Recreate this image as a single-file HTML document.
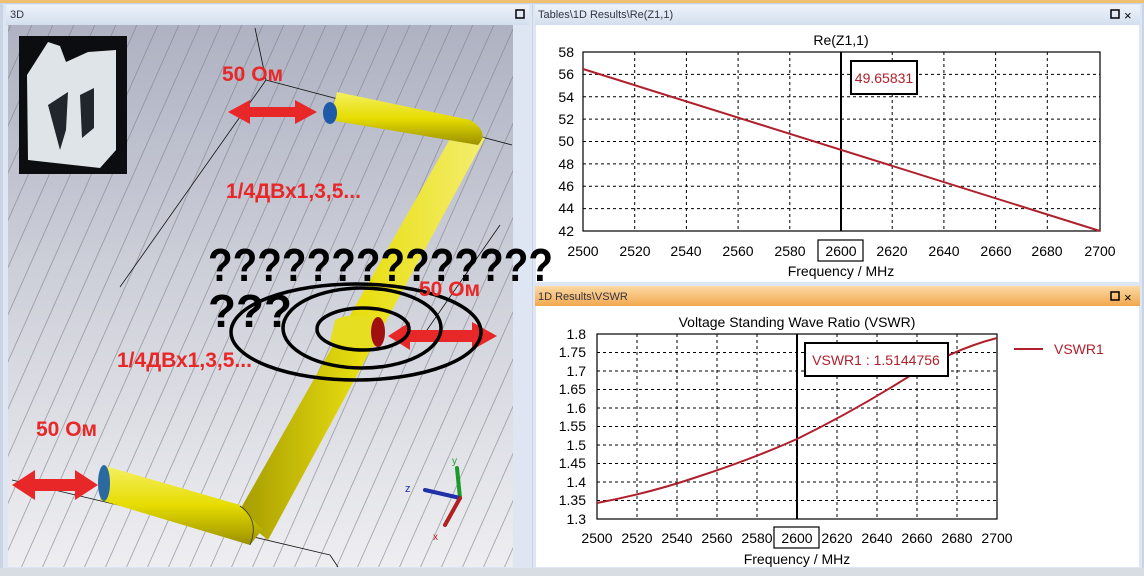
<!DOCTYPE html>
<html><head><meta charset="utf-8"><style>
html,body{margin:0;padding:0;width:1144px;height:576px;overflow:hidden;background:#c9d5e5;font-family:"Liberation Sans",sans-serif}
</style></head><body>
<svg width="1144" height="576" style="position:absolute;left:0;top:0" xmlns="http://www.w3.org/2000/svg">
<defs>
<linearGradient id="bg" x1="0" y1="0" x2="0" y2="1"><stop offset="0" stop-color="#aeb2c2"/><stop offset="0.5" stop-color="#d0d2db"/><stop offset="1" stop-color="#eeeef1"/></linearGradient>
<linearGradient id="tb" x1="0" y1="0" x2="0" y2="1"><stop offset="0" stop-color="#eef3fa"/><stop offset="1" stop-color="#d3deee"/></linearGradient>
<linearGradient id="ob" x1="0" y1="0" x2="0" y2="1"><stop offset="0" stop-color="#fcd9a4"/><stop offset="1" stop-color="#f2a850"/></linearGradient>
<linearGradient id="yl" x1="0" y1="0" x2="0" y2="1"><stop offset="0" stop-color="#f5f060"/><stop offset="0.5" stop-color="#e6dc00"/><stop offset="1" stop-color="#9a9000"/></linearGradient>
<linearGradient id="yd" x1="0" y1="0" x2="1" y2="0"><stop offset="0" stop-color="#a59b00"/><stop offset="0.5" stop-color="#e8de10"/><stop offset="1" stop-color="#f4ee70"/></linearGradient>
<pattern id="gl" width="21" height="576" patternUnits="userSpaceOnUse" patternTransform="skewX(-24)"><line x1="1" y1="0" x2="1" y2="576" stroke="#80808a" stroke-width="0.8"/></pattern>
</defs>
<rect x="0" y="0" width="1144" height="3" fill="#f0c070"/>
<rect x="3" y="4" width="529" height="568" fill="#dde6f2"/>
<rect x="6" y="5" width="523" height="20" fill="url(#tb)"/>
<text x="10" y="18" font-size="11" fill="#334">3D</text>
<rect x="516" y="10" width="8" height="8" fill="none" stroke="#000" stroke-width="1.5"/>
<rect x="8" y="25" width="505" height="542" fill="url(#bg)"/>
<rect x="8" y="25" width="505" height="542" fill="url(#gl)" opacity="0.8"/>
<g stroke="#111" stroke-width="0.8" fill="none">
<line x1="255" y1="28" x2="266" y2="80"/><line x1="266" y1="80" x2="512" y2="145"/><line x1="266" y1="80" x2="120" y2="287"/>
<line x1="12" y1="480" x2="330" y2="555"/><line x1="330" y1="555" x2="338" y2="567"/>
<line x1="500" y1="225" x2="420" y2="340"/>
</g>
<rect x="19" y="36" width="108" height="138" fill="#0b0d10"/>
<path d="M27 75 L48 42 L60 46 L66 62 L88 52 L116 50 L116 150 L100 168 L28 160 Z" fill="#dfe4e8"/>
<path d="M48 105 L60 150 L66 130 L68 92 Z M80 95 L94 88 L94 128 L82 138 Z" fill="#20262c"/>
<path d="M237 515 L455 130 L485 138 L268 540 Z" fill="url(#yd)"/>
<path d="M337 92 L470 120 Q490 132 478 145 L330 120 Z" fill="url(#yl)"/>
<path d="M105 466 L240 505 L262 530 L250 545 L100 500 Z" fill="url(#yl)"/>
<path d="M240 506 Q260 520 250 545" fill="none" stroke="#333" stroke-width="0.8"/>
<ellipse cx="104" cy="483" rx="6" ry="18" fill="#2a6aa0"/>
<ellipse cx="330" cy="113" rx="7" ry="11" fill="#1e5aa8"/>
<path d="M335 320 Q350 312 376 318 L380 346 Q355 350 330 342 Z" fill="#e6de20"/>
<ellipse cx="378" cy="332" rx="7" ry="15" fill="#a01010"/>
<g fill="#e82828">
<path d="M228 112 L250 100 L250 107 L295 107 L295 100 L317 112 L295 124 L295 117 L250 117 L250 124 Z"/>
<path d="M388 336 L410 322 L410 330 L472 330 L472 322 L497 336 L472 350 L472 342 L410 342 L410 350 Z"/>
<path d="M12 485 L35 470 L35 479 L75 479 L75 470 L98 485 L75 500 L75 491 L35 491 L35 500 Z"/>
</g>
<g fill="none" stroke="#000" stroke-width="3.5">
<ellipse cx="356" cy="332" rx="125" ry="48"/>
<ellipse cx="362" cy="328" rx="79" ry="40"/>
<ellipse cx="363" cy="329" rx="46" ry="21"/>
</g>
<g stroke-width="4" stroke-linecap="round">
<line x1="460" y1="498" x2="457" y2="468" stroke="#1a9a2a"/>
<line x1="460" y1="498" x2="425" y2="490" stroke="#2030a8"/>
<line x1="460" y1="498" x2="445" y2="525" stroke="#b02020"/>
</g>
<text x="452" y="464" font-size="10" fill="#1a9a2a">y</text>
<text x="405" y="492" font-size="11" fill="#2030a8">z</text>
<text x="433" y="540" font-size="10" fill="#c02020">x</text>
<g font-family="Liberation Sans,sans-serif" font-weight="bold" fill="#e82828" font-size="21">
<text x="222" y="81">50 Ом</text>
<text x="226" y="198">1/4ДВх1,3,5...</text>
<text x="117" y="367">1/4ДВх1,3,5...</text>
<text x="419" y="296">50 Ом</text>
<text x="36" y="436">50 Ом</text>
</g>

<rect x="533" y="4" width="609" height="280" fill="#dde6f2"/>
<rect x="535" y="5" width="605" height="20" fill="url(#tb)"/>
<text x="538" y="18" font-size="11" fill="#334">Tables\1D Results\Re(Z1,1)</text>
<rect x="1111" y="10" width="8" height="8" fill="none" stroke="#000" stroke-width="1.5"/>
<text x="1124" y="20" font-size="13" fill="#000">×</text>
<rect x="536" y="25" width="603" height="257" fill="#fff"/>
<g stroke="#000" stroke-width="1" stroke-dasharray="3,3">
<line x1="634.7" y1="52" x2="634.7" y2="231"/><line x1="686.4" y1="52" x2="686.4" y2="231"/><line x1="738.1" y1="52" x2="738.1" y2="231"/><line x1="789.8" y1="52" x2="789.8" y2="231"/><line x1="892.2" y1="52" x2="892.2" y2="231"/><line x1="943.9" y1="52" x2="943.9" y2="231"/><line x1="995.6" y1="52" x2="995.6" y2="231"/><line x1="1047.3" y1="52" x2="1047.3" y2="231"/>
<line x1="583" y1="74.4" x2="1100" y2="74.4"/><line x1="583" y1="96.8" x2="1100" y2="96.8"/><line x1="583" y1="119.1" x2="1100" y2="119.1"/><line x1="583" y1="141.5" x2="1100" y2="141.5"/><line x1="583" y1="163.9" x2="1100" y2="163.9"/><line x1="583" y1="186.3" x2="1100" y2="186.3"/><line x1="583" y1="208.6" x2="1100" y2="208.6"/>
</g>
<rect x="583" y="52" width="517" height="179" fill="none" stroke="#000" stroke-width="1.2"/>
<line x1="841" y1="52" x2="841" y2="231" stroke="#000" stroke-width="2"/>
<line x1="583" y1="69" x2="1100" y2="231" stroke="#b0202c" stroke-width="2"/>
<rect x="851" y="61" width="66" height="33" fill="#fff" stroke="#000" stroke-width="2"/>
<text x="884" y="83" font-size="14" fill="#b0202c" text-anchor="middle">49.65831</text>
<text x="841" y="45" font-size="14" text-anchor="middle">Re(Z1,1)</text>
<g font-size="14" text-anchor="end">
<text x="574" y="57">58</text><text x="574" y="79">56</text><text x="574" y="102">54</text><text x="574" y="124">52</text><text x="574" y="146">50</text><text x="574" y="169">48</text><text x="574" y="191">46</text><text x="574" y="213">44</text><text x="574" y="236">42</text>
</g>
<g font-size="14" text-anchor="middle">
<text x="583" y="256">2500</text><text x="635" y="256">2520</text><text x="686" y="256">2540</text><text x="738" y="256">2560</text><text x="790" y="256">2580</text><text x="841" y="256">2600</text><text x="892" y="256">2620</text><text x="944" y="256">2640</text><text x="996" y="256">2660</text><text x="1047" y="256">2680</text><text x="1100" y="256">2700</text>
<text x="841" y="276">Frequency / MHz</text>
</g>
<rect x="818" y="240" width="45" height="21" fill="none" stroke="#000" stroke-width="1.2"/>

<rect x="533" y="284" width="609" height="288" fill="#dde6f2"/>
<rect x="535" y="286" width="605" height="20" fill="url(#ob)"/>
<text x="538" y="300" font-size="11" fill="#334">1D Results\VSWR</text>
<rect x="1111" y="292" width="8" height="8" fill="none" stroke="#000" stroke-width="1.5"/>
<text x="1124" y="302" font-size="13" fill="#000">×</text>
<rect x="536" y="306" width="603" height="261" fill="#fff"/>
<g stroke="#000" stroke-width="1" stroke-dasharray="3,3">
<line x1="637" y1="334" x2="637" y2="519"/><line x1="677" y1="334" x2="677" y2="519"/><line x1="717" y1="334" x2="717" y2="519"/><line x1="757" y1="334" x2="757" y2="519"/><line x1="837" y1="334" x2="837" y2="519"/><line x1="877" y1="334" x2="877" y2="519"/><line x1="917" y1="334" x2="917" y2="519"/><line x1="957" y1="334" x2="957" y2="519"/>
<line x1="597" y1="352.5" x2="997" y2="352.5"/><line x1="597" y1="371" x2="997" y2="371"/><line x1="597" y1="389.5" x2="997" y2="389.5"/><line x1="597" y1="408" x2="997" y2="408"/><line x1="597" y1="426.5" x2="997" y2="426.5"/><line x1="597" y1="445" x2="997" y2="445"/><line x1="597" y1="463.5" x2="997" y2="463.5"/><line x1="597" y1="482" x2="997" y2="482"/><line x1="597" y1="500.5" x2="997" y2="500.5"/>
</g>
<rect x="597" y="334" width="400" height="185" fill="none" stroke="#000" stroke-width="1.2"/>
<line x1="797" y1="334" x2="797" y2="519" stroke="#000" stroke-width="2"/>
<path d="M597 503 Q650 493 697 477 Q750 460 797 439 Q850 413 900 382 Q950 350 997 338" fill="none" stroke="#b0202c" stroke-width="2"/>
<rect x="805" y="343" width="143" height="33" fill="#fff" stroke="#000" stroke-width="2"/>
<text x="876" y="365" font-size="14" fill="#b0202c" text-anchor="middle">VSWR1 : 1.5144756</text>
<line x1="1014" y1="349" x2="1043" y2="349" stroke="#b0202c" stroke-width="2"/>
<text x="1054" y="354" font-size="14" fill="#b0202c">VSWR1</text>
<text x="797" y="327" font-size="14" text-anchor="middle">Voltage Standing Wave Ratio (VSWR)</text>
<g font-size="14" text-anchor="end">
<text x="586" y="339">1.8</text><text x="586" y="357">1.75</text><text x="586" y="376">1.7</text><text x="586" y="394">1.65</text><text x="586" y="413">1.6</text><text x="586" y="431">1.55</text><text x="586" y="450">1.5</text><text x="586" y="468">1.45</text><text x="586" y="487">1.4</text><text x="586" y="505">1.35</text><text x="586" y="524">1.3</text>
</g>
<g font-size="14" text-anchor="middle">
<text x="597" y="543">2500</text><text x="637" y="543">2520</text><text x="677" y="543">2540</text><text x="717" y="543">2560</text><text x="757" y="543">2580</text><text x="797" y="543">2600</text><text x="837" y="543">2620</text><text x="877" y="543">2640</text><text x="917" y="543">2660</text><text x="957" y="543">2680</text><text x="997" y="543">2700</text>
<text x="797" y="564">Frequency / MHz</text>
</g>
<rect x="774" y="527" width="45" height="21" fill="none" stroke="#000" stroke-width="1.2"/>
<rect x="0" y="568" width="1144" height="8" fill="#d8dde4"/>
<g font-family="Liberation Sans,sans-serif" font-weight="bold" fill="#000" font-size="46">
<text x="208" y="281" textLength="345" lengthAdjust="spacingAndGlyphs">??????????????</text>
<text x="208" y="327" textLength="84" lengthAdjust="spacingAndGlyphs">???</text>
</g>
</svg>
</body></html>
